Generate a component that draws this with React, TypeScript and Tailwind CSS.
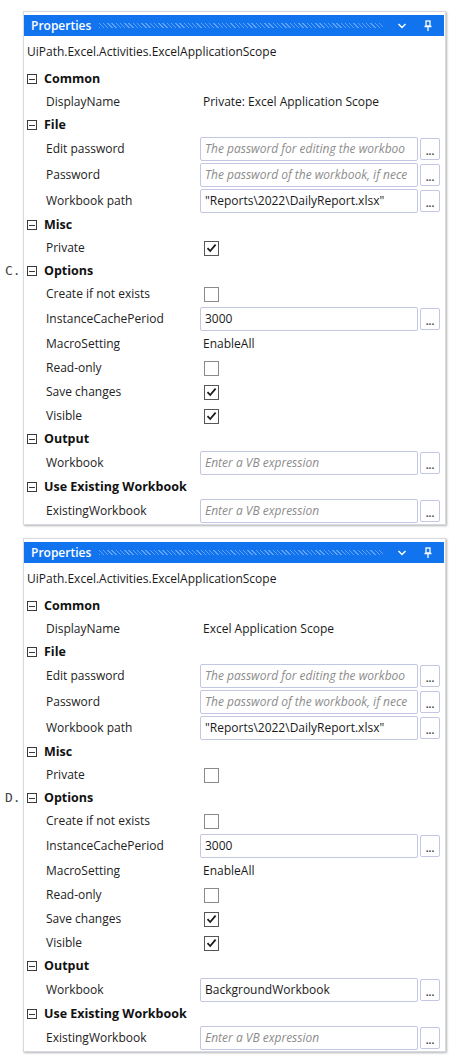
import React from "react";

type Row =
  | { kind: "cat"; label: string }
  | { kind: "text"; label: string; value: string }
  | { kind: "input"; label: string; value?: string; placeholder?: string }
  | { kind: "check"; label: string; checked: boolean };

const vb = "Enter a VB expression";

function buildRows(variant: "C" | "D"): Row[] {
  return [
    { kind: "cat", label: "Common" },
    {
      kind: "text",
      label: "DisplayName",
      value: variant === "C" ? "Private: Excel Application Scope" : "Excel Application Scope",
    },
    { kind: "cat", label: "File" },
    { kind: "input", label: "Edit password", placeholder: "The password for editing the workboo" },
    { kind: "input", label: "Password", placeholder: "The password of the workbook, if nece" },
    { kind: "input", label: "Workbook path", value: '"Reports\\2022\\DailyReport.xlsx"' },
    { kind: "cat", label: "Misc" },
    { kind: "check", label: "Private", checked: variant === "C" },
    { kind: "cat", label: "Options" },
    { kind: "check", label: "Create if not exists", checked: false },
    { kind: "input", label: "InstanceCachePeriod", value: "3000" },
    { kind: "text", label: "MacroSetting", value: "EnableAll" },
    { kind: "check", label: "Read-only", checked: false },
    { kind: "check", label: "Save changes", checked: true },
    { kind: "check", label: "Visible", checked: true },
    { kind: "cat", label: "Output" },
    variant === "C"
      ? { kind: "input", label: "Workbook", placeholder: vb }
      : { kind: "input", label: "Workbook", value: "BackgroundWorkbook" },
    { kind: "cat", label: "Use Existing Workbook" },
    { kind: "input", label: "ExistingWorkbook", placeholder: vb },
  ];
}

function Collapse() {
  return (
    <span className="w-[10px] h-[10px] border border-[#3a3a3a] flex items-center justify-center shrink-0">
      <span className="block w-[6px] h-px bg-[#3a3a3a]" />
    </span>
  );
}

function CheckBox({ checked }: { checked: boolean }) {
  return (
    <span
      className={
        checked
          ? "w-[15px] h-[15px] border border-[#555] bg-white flex items-center justify-center"
          : "block w-[15px] h-[15px] border border-[#8a8a8a] bg-white"
      }
    >
      {checked && (
        <svg width="11" height="10" viewBox="0 0 11 10">
          <path d="M1.5 5.2 L4.2 8 L9.6 1.6" fill="none" stroke="#1a1a1a" strokeWidth="1.8" />
        </svg>
      )}
    </span>
  );
}

function Header() {
  return (
    <div className="h-[21px] mr-px bg-[#1273ef] flex items-center pl-[7px] pr-[11px] gap-2">
      <span className="text-white font-semibold text-[12px] leading-none">Properties</span>
      <span className="flex-1 h-[5px] opacity-60 bg-[repeating-linear-gradient(45deg,rgba(255,255,255,0.55)_0_1px,transparent_1px_3px)]" />
      <svg width="10" height="8" viewBox="0 0 10 8" className="ml-[6px]">
        <path d="M1.5 2 L5 5.5 L8.5 2" fill="none" stroke="white" strokeWidth="1.5" />
      </svg>
      <svg width="10" height="12" viewBox="0 0 10 12" className="ml-[8px]">
        <rect x="3" y="1" width="4" height="5" fill="none" stroke="white" strokeWidth="1.3" />
        <path d="M1.5 6.5 H8.5 M5 6.5 V11" stroke="white" strokeWidth="1.3" />
      </svg>
    </div>
  );
}

function PropRow({ row, letter }: { row: Row; letter?: string }) {
  if (row.kind === "cat") {
    return (
      <div className="relative h-[22px] flex items-center gap-[7px] pl-[3px]">
        {letter && (
          <span className="absolute -left-[19px] top-[1px] text-[13px] text-[#444] font-['DejaVu_Sans_Mono',monospace]">
            {letter}
          </span>
        )}
        <Collapse />
        <span className="font-bold text-[12.5px] text-[#111]">{row.label}</span>
      </div>
    );
  }
  const height = row.kind === "input" ? "h-[26px]" : "h-[24px]";
  return (
    <div className={`${height} flex items-center`}>
      <span className="w-[176px] pl-[22px] text-[12px] text-[#222] shrink-0">{row.label}</span>
      {row.kind === "text" && <span className="pl-[3px] text-[12px] text-[#1a1a1a]">{row.value}</span>}
      {row.kind === "check" && (
        <div className="flex pl-[4px]">
          <CheckBox checked={row.checked} />
        </div>
      )}
      {row.kind === "input" && (
        <div className="flex items-center gap-[2px]">
          <div className="w-[218px] h-[24px] border border-[#c4c7e4] rounded-[2px] flex items-center px-[4px] overflow-hidden whitespace-nowrap">
            {row.value ? (
              <span className="text-[12px] text-[#1a1a1a]">{row.value}</span>
            ) : (
              <span className="text-[12px] italic text-[#8c8c8c]">{row.placeholder}</span>
            )}
          </div>
          <div className="w-[20px] h-[22px] border border-[#c4c7e4] rounded-[2px] flex items-end justify-center pb-[3px]">
            <span className="text-[10px] leading-none font-bold text-[#444]">...</span>
          </div>
        </div>
      )}
    </div>
  );
}

function Panel({ variant }: { variant: "C" | "D" }) {
  const rows = buildRows(variant);
  return (
    <div className="ml-[23px] w-[423px] border border-[#d6dae0] shadow-[1px_1px_2px_rgba(0,0,0,0.3)] bg-white pt-[3px]">
      <Header />
      <div className="h-[32px] flex items-center pl-[3px] text-[12px] text-[#1a1a1a]">
        UiPath.Excel.Activities.ExcelApplicationScope
      </div>
      {rows.map((row, i) => (
        <PropRow key={i} row={row} letter={row.kind === "cat" && row.label === "Options" ? `${variant}.` : undefined} />
      ))}
    </div>
  );
}

export default function App() {
  return (
    <div className="w-[456px] h-[1063px] bg-white pt-[11px] font-['Open_Sans',sans-serif] flex flex-col gap-[13px]">
      <Panel variant="C" />
      <Panel variant="D" />
    </div>
  );
}
